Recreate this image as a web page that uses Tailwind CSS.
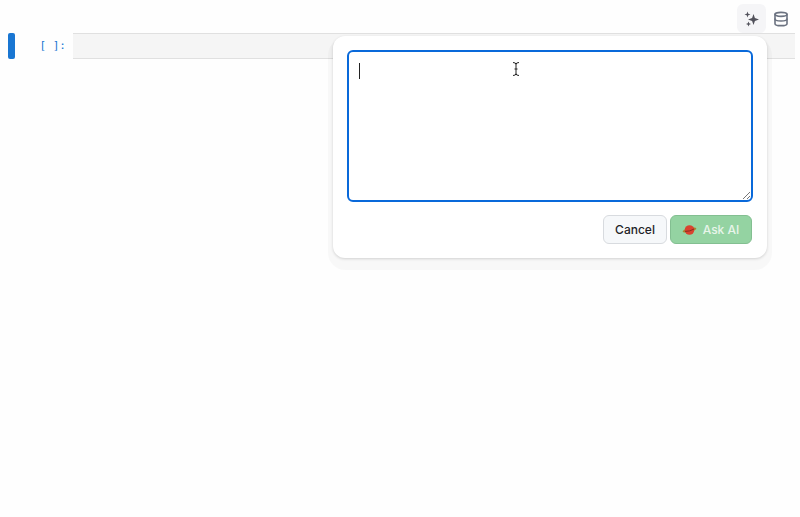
<!DOCTYPE html>
<html lang="en">
<head>
  <meta charset="UTF-8" />
  <title>Notebook</title>
  <script src="https://cdn.jsdelivr.net/npm/@tailwindcss/browser@4"></script>
</head>
<body class="bg-[#fefefe] w-[800px] h-[517px] overflow-hidden relative font-['Inter',sans-serif]">

  <!-- Toolbar -->
  <header class="h-[33px] flex items-start justify-end pt-1 pr-[5px]">
    <button class="w-[29px] h-[29px] rounded-md bg-[#f5f5f7] flex items-center justify-center">
      <svg class="w-[18px] h-[18px] text-[#52525b]" viewBox="0 0 18 18" fill="currentColor">
        <path d="M10.5 4 L11.9 8.1 L16 9.5 L11.9 10.9 L10.5 15 L9.1 10.9 L5 9.5 L9.1 8.1 Z" />
        <path d="M4.5 1.5 L5.3 3.7 L7.5 4.5 L5.3 5.3 L4.5 7.5 L3.7 5.3 L1.5 4.5 L3.7 3.7 Z" />
        <path d="M5.5 11.5 L6.2 13.3 L8 14 L6.2 14.7 L5.5 16.5 L4.8 14.7 L3 14 L4.8 13.3 Z" />
      </svg>
    </button>
    <button class="w-[29px] h-[29px] flex items-center justify-center">
      <svg class="w-4 h-4 text-[#6b7280]" viewBox="0 0 24 24" fill="none" stroke="currentColor" stroke-width="2.4" stroke-linecap="round" stroke-linejoin="round">
        <ellipse cx="12" cy="5" rx="9" ry="3" />
        <path d="M3 5v14a9 3 0 0 0 18 0V5" />
        <path d="M3 12a9 3 0 0 0 18 0" />
      </svg>
    </button>
  </header>

  <!-- Cell -->
  <div class="flex pl-2 pr-[5px] h-[26px]">
    <div class="w-[7px] rounded-[2px] bg-[#1976d2]"></div>
    <div class="w-[58px] pr-[7px] flex items-center justify-end font-['DejaVu_Sans_Mono',monospace] text-[11px] text-[#1976d2] whitespace-pre">[ ]:</div>
    <div class="flex-1 bg-[#f5f5f5] border-y border-[#e0e0e0]"></div>
  </div>

  <!-- Ask AI popover -->
  <div class="absolute left-[333px] top-[36px] w-[434px] h-[222px] bg-white rounded-xl pl-[14px] pt-[14px] flex flex-col shadow-[0_7px_0_5px_rgba(0,0,0,0.022),0_1px_3px_rgba(0,0,0,0.16)]">
    <div class="relative w-[406px] h-[152px] rounded-md border-2 border-[#0969da] bg-white">
      <div class="absolute left-[10px] top-[11px] w-px h-[16px] bg-[#222]"></div>
      <!-- resize grip -->
      <svg class="absolute right-0 bottom-0 w-[9px] h-[9px] text-[#777]" viewBox="0 0 9 9" fill="none" stroke="currentColor" stroke-width="1">
        <path d="M1 8 L8 1 M5 8 L8 5" />
      </svg>
    </div>
    <div class="flex justify-end gap-[3px] mt-[13px] w-[405px]">
      <button class="w-[64px] h-[29px] rounded-md bg-[#f6f8fa] border border-[#d8dbdf] text-[12px] font-medium text-[#1f2328]">Cancel</button>
      <button class="w-[82px] h-[29px] rounded-md bg-[#94d3a2] border border-[#83bf91] text-[12px] font-medium text-[#e8f5ea] flex items-center justify-center gap-[6px] pr-px">
        <svg class="w-[15px] h-[12px]" viewBox="0 0 15 12">
          <ellipse cx="7.5" cy="6" rx="7" ry="2" transform="rotate(-12 7.5 6)" fill="#a8842f" />
          <circle cx="7.5" cy="6" r="4.8" fill="#d9432f" />
          <path d="M3 7.4 Q8 7.6 12 5" stroke="#8a2a1e" stroke-width="1" fill="none" />
        </svg>
        <span>Ask AI</span>
      </button>
    </div>
  </div>

  <!-- Mouse cursor -->
  <svg class="absolute left-[512px] top-[62px] w-[8px] h-[14px] text-[#222]" viewBox="0 0 8 14" fill="none" stroke="currentColor" stroke-width="1">
    <path d="M1 0.5 Q4 0.5 4 2.5 V11.5 Q4 13.5 1 13.5 M7 0.5 Q4 0.5 4 2.5 M4 11.5 Q4 13.5 7 13.5 M2.5 7 H5.5" />
  </svg>

</body>
</html>
